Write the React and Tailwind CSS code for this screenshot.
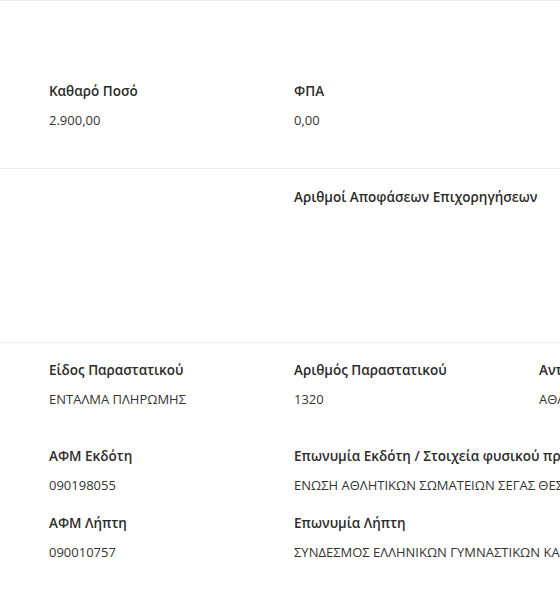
import React from 'react';

const Field = ({ label, value }) => (
  <div className="w-[245px] shrink-0 pr-4">
    <div className="text-[13.5px] leading-5 font-semibold text-[#2b2b2b] whitespace-nowrap">{label}</div>
    {value !== undefined && (
      <div className="mt-[10px] text-[13px] leading-[18px] text-[#333] whitespace-nowrap">{value}</div>
    )}
  </div>
);

const App = () => {
  return (
    <div
      className="w-[560px] h-[600px] overflow-hidden bg-white"
      style={{ fontFamily: '"Open Sans", "Noto Sans", sans-serif' }}
    >
      <div className="w-[900px]">
        <section className="h-[168px] border-t border-[#ececec] pt-[80px] pl-[49px]">
          <div className="flex">
            <Field label="Καθαρό Ποσό" value="2.900,00" />
            <Field label="ΦΠΑ" value="0,00" />
          </div>
        </section>

        <section className="h-[174px] border-t border-[#ececec] pt-[18px] pl-[49px]">
          <div className="flex">
            <div className="w-[245px] shrink-0" />
            <Field label="Αριθμοί Αποφάσεων Επιχορηγήσεων" />
          </div>
        </section>

        <section className="border-t border-[#ececec] pt-[17px] pl-[49px]">
          <div className="flex">
            <Field label="Είδος Παραστατικού" value="ΕΝΤΑΛΜΑ ΠΛΗΡΩΜΗΣ" />
            <Field label="Αριθμός Παραστατικού" value="1320" />
            <Field label="Αντισυμβαλλόμενος" value="ΑΘΛΗΤΙΚΟ ΣΩΜΑΤΕΙΟ" />
          </div>
          <div className="flex mt-[38px]">
            <Field label="ΑΦΜ Εκδότη" value="090198055" />
            <Field
              label="Επωνυμία Εκδότη / Στοιχεία φυσικού προσώπου"
              value="ΕΝΩΣΗ ΑΘΛΗΤΙΚΩΝ ΣΩΜΑΤΕΙΩΝ ΣΕΓΑΣ ΘΕΣΣΑΛΟΝΙΚΗΣ"
            />
          </div>
          <div className="flex mt-[19px]">
            <Field label="ΑΦΜ Λήπτη" value="090010757" />
            <Field
              label="Επωνυμία Λήπτη"
              value="ΣΥΝΔΕΣΜΟΣ ΕΛΛΗΝΙΚΩΝ ΓΥΜΝΑΣΤΙΚΩΝ ΚΑΙ ΑΘΛΗΤΙΚΩΝ ΣΩΜΑΤΕΙΩΝ"
            />
          </div>
        </section>
      </div>
    </div>
  );
};

export default App;
